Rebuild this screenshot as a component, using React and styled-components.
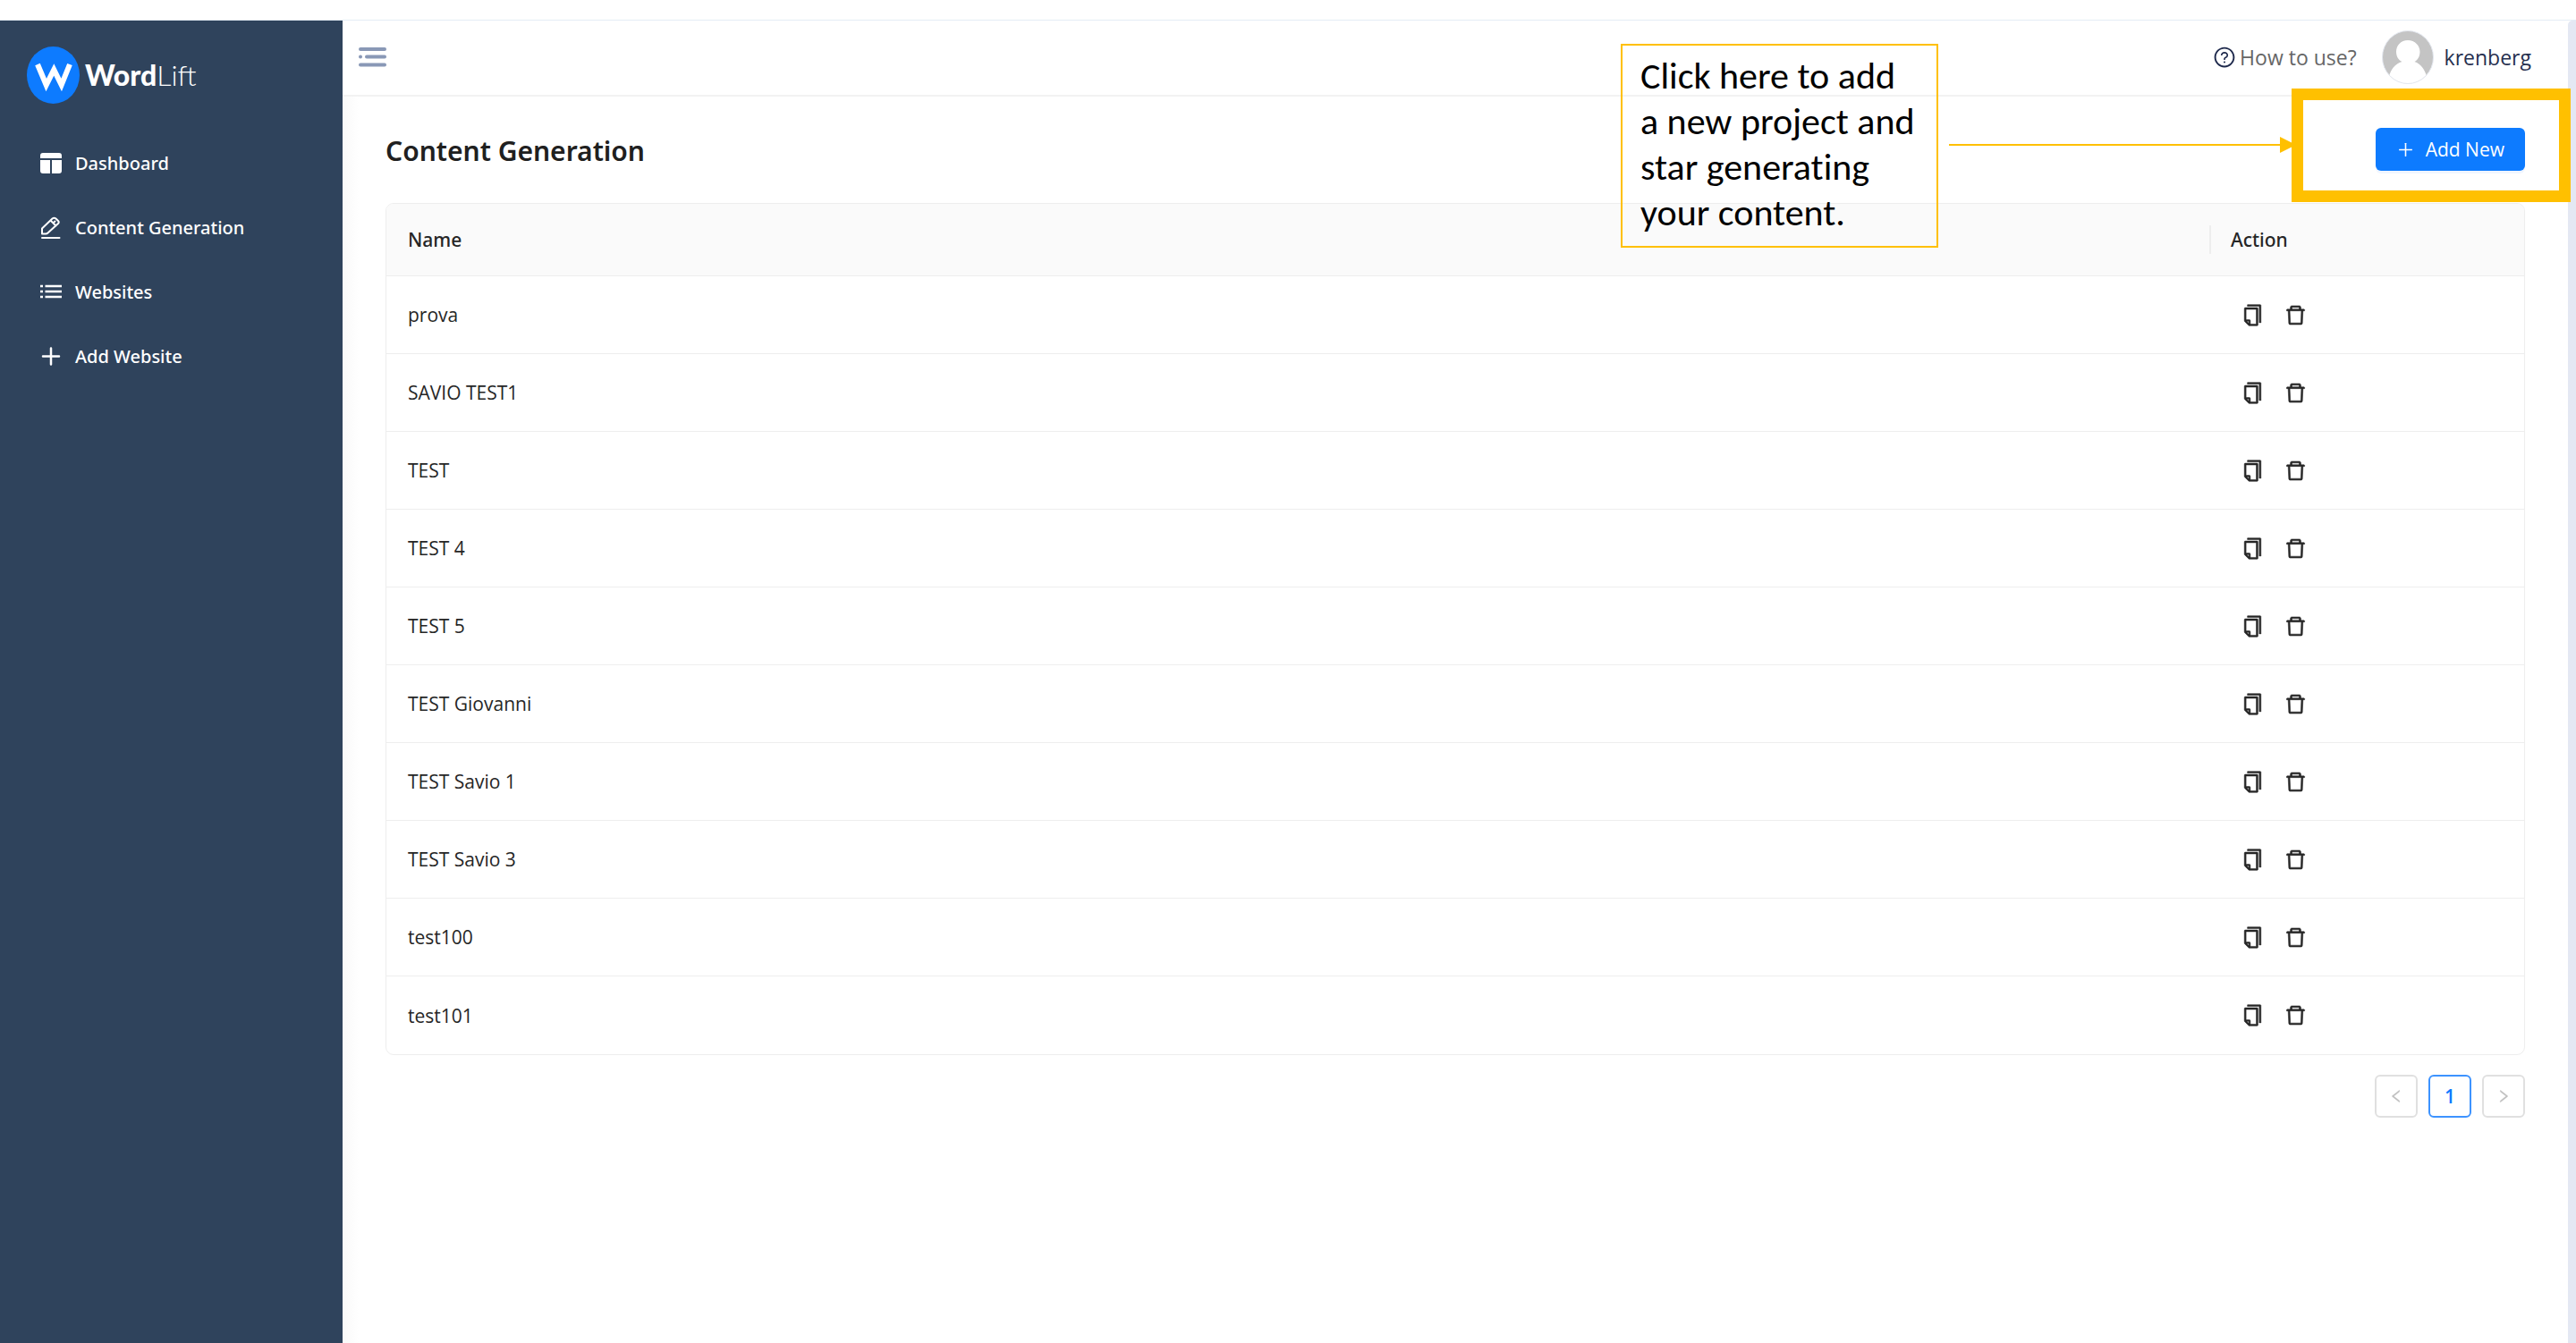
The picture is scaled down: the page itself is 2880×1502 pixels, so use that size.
import React from "react";
import styled, { createGlobalStyle } from "styled-components";
import {
  AiOutlineCopy,
  AiOutlineDelete,
  AiOutlineLeft,
  AiOutlinePlus,
  AiOutlineQuestionCircle,
  AiOutlineRight,
} from "react-icons/ai";

const GlobalStyle = createGlobalStyle`
  *, *::before, *::after { box-sizing: border-box; }
  body {
    margin: 0;
    background: #fff;
    color: #262626;
    font: 400 21px/32px "Open Sans", "Noto Sans", sans-serif;
  }
  button { font: inherit; cursor: pointer; }
  a { color: inherit; text-decoration: none; }
  svg { display: block; flex: none; }
`;

const blue = "#0d7bff";
const amber = "#ffc000";
const line = "#eeeeee";

const Page = styled.div`
  min-height: 100vh;
  padding-top: 22px;
  display: flex;
`;

const Shell = styled.div`
  flex: 1;
  display: flex;
  border-top: 1px solid #e4edf5;
`;

const Sidebar = styled.aside`
  width: 383px;
  flex: none;
  padding: 29px 30px;
  background: #2f435c;
  color: #fff;
`;

const Logo = styled.a`
  display: flex;
  align-items: center;
  gap: 6px;
  height: 64px;
`;

const Wordmark = styled.span`
  font: 300 32px/40px Lato, sans-serif;
  strong { font-weight: 900; }
`;

const Menu = styled.nav`
  display: flex;
  flex-direction: column;
  gap: 12px;
  padding-top: 37px;
`;

const MenuItem = styled.a`
  height: 60px;
  padding-left: 14px;
  display: flex;
  align-items: center;
  gap: 14px;
  font: 500 20px/30px "Noto Sans", "Open Sans", sans-serif;
`;

const Main = styled.div`
  flex: 1;
  min-width: 0;
  display: flex;
  flex-direction: column;
`;

const TopBar = styled.header`
  height: 85px;
  padding: 0 41px 2px 17px;
  display: flex;
  align-items: center;
  justify-content: space-between;
  border-bottom: 2px solid #f2f2f2;
  font-size: 23px;
`;

const PlainButton = styled.button`
  padding: 0;
  border: 0;
  background: none;
  color: inherit;
  display: flex;
`;

const UserArea = styled.div`
  display: flex;
  align-items: center;
  gap: 28px;
`;

const HelpLink = styled.a`
  display: flex;
  align-items: center;
  gap: 4px;
  color: #666;
  svg { color: #1f2a4d; }
`;

const Account = styled.a`
  display: flex;
  align-items: center;
  gap: 12px;
  color: #27304f;
`;

const Content = styled.main`
  flex: 1;
  padding: 35px 48px 48px;
  background: linear-gradient(90deg, #f9f9f9, #fff 18px);
`;

const TitleRow = styled.div`
  display: flex;
  align-items: flex-start;
  justify-content: space-between;
  margin-bottom: 32px;
`;

const Title = styled.h1`
  margin: 0;
  color: #202020;
  font: 600 30px/52px "Noto Sans", "Open Sans", sans-serif;
`;

const AddArea = styled.div`
  position: relative;
`;

const AddButton = styled.button`
  height: 48px;
  padding: 0 23px;
  display: flex;
  align-items: center;
  gap: 12px;
  border: 0;
  border-radius: 6px;
  background: ${blue};
  color: #fff;
  box-shadow: 0 3px 0 rgba(5, 95, 255, 0.06);
`;

const Highlight = styled.div`
  position: absolute;
  top: -44px;
  right: -51px;
  width: 312px;
  height: 127px;
  border: 13px solid ${amber};
  pointer-events: none;
`;

const Pointer = styled.div`
  position: absolute;
  top: 18px;
  right: 274px;
  width: 370px;
  height: 2px;
  background: ${amber};
  &::after {
    content: "";
    position: absolute;
    top: -8px;
    right: -18px;
    border: solid transparent;
    border-width: 9px 0 9px 18px;
    border-left-color: ${amber};
  }
`;

const Callout = styled.p`
  position: absolute;
  top: -94px;
  right: 656px;
  width: 355px;
  margin: 0;
  padding: 8px 20px 12px;
  border: 2px solid ${amber};
  color: #000;
  font: 400 42px/51px Carlito, Calibri, Lato, sans-serif;
  font-variant-ligatures: none;
  white-space: nowrap;
`;

const Table = styled.table`
  width: 100%;
  border: 1px solid ${line};
  border-radius: 9px;
  border-collapse: separate;
  border-spacing: 0;
  table-layout: fixed;
  overflow: hidden;
  text-align: left;
`;

const HeadCell = styled.th`
  width: ${(p) => p.$width || "auto"};
  height: 81px;
  padding: 0;
  background: #fafafa;
  border-bottom: 1px solid ${line};
  font: 500 21px/32px "Noto Sans", "Open Sans", sans-serif;
`;

const HeadLabel = styled.div`
  padding: 0 22px;
  border-left: 2px solid ${(p) => (p.$divided ? line : "transparent")};
`;

const Cell = styled.td`
  height: 87px;
  padding: 0 24px;
  tr:not(:last-child) > & { border-bottom: 1px solid ${line}; }
`;

const Actions = styled.div`
  display: flex;
  gap: 21px;
  padding-left: 11px;
  svg { stroke-width: 20; }
`;

const Pagination = styled.nav`
  display: flex;
  justify-content: flex-end;
  gap: 12px;
  padding-top: 22px;
`;

const PageButton = styled.button`
  width: 48px;
  height: 48px;
  padding: 0;
  display: flex;
  align-items: center;
  justify-content: center;
  border: 2px solid ${(p) => (p.$active ? "#3d93ff" : "#e0e0e0")};
  border-radius: 6px;
  background: #fff;
  color: ${(p) => (p.$active ? blue : "#bfbfbf")};
  font-weight: 600;
  svg { stroke-width: 20; }
`;

const ScrollTrack = styled.div`
  width: 9px;
  flex: none;
  border-radius: 5px 0 0 0;
  background: #e4e8f3;
`;

const LogoMark = () => (
  <svg width="59" height="64" viewBox="0 0 59 64" fill="none" aria-hidden="true">
    <ellipse cx="29.5" cy="32" rx="29.5" ry="32" fill={blue} />
    <path d="M12 20L21.7 43L30.300 26L38.700 43L48 20" stroke="#fff" strokeWidth="6" strokeLinejoin="miter" strokeMiterlimit="6" />
  </svg>
);

const DashboardIcon = () => (
  <svg width="26" height="26" viewBox="0 0 26 26" fill="#fff" aria-hidden="true">
    <path d="M1 7V4a3 3 0 0 1 3-3h18a3 3 0 0 1 3 3v3zM1 9h11v15H4a3 3 0 0 1-3-3zM14 9h11v12a3 3 0 0 1-3 3h-8z" />
  </svg>
);

const PencilIcon = () => (
  <svg width="26" height="26" viewBox="0 0 26 26" fill="none" stroke="#fff" strokeWidth="2" strokeLinejoin="round" strokeLinecap="round" aria-hidden="true">
    <path d="M3 19.500V13.500L14.500 2.500Q16.500 1 18.500 2.500L21 5Q22.500 6.500 21 8L9.500 18.500Q8.500 19.500 7 19.500ZM12.500 4.500L18.500 10.500M15.500 7.500l2-2M3 24H22.500" />
  </svg>
);

const ListIcon = () => (
  <svg width="26" height="26" viewBox="0 0 26 26" stroke="#fff" strokeWidth="2.5" aria-hidden="true">
    <path d="M1 6h3M1 12h3M1 18h3M6.500 6H25M6.500 12H25M6.500 18H25" />
  </svg>
);

const PlusIcon = () => (
  <svg width="26" height="26" viewBox="0 0 26 26" stroke="#fff" strokeWidth="2.5" strokeLinecap="round" aria-hidden="true">
    <path d="M4 12.500H22M13 3.500V21.500" />
  </svg>
);

const CollapseIcon = () => (
  <svg width="32" height="24" viewBox="0 0 32 24" stroke="#8998b6" strokeWidth="4" strokeLinecap="round" aria-hidden="true">
    <path d="M3 3H30M3 11.500h.01M10 11.500H30M3 20.500H30" />
  </svg>
);

const Avatar = () => (
  <svg width="58" height="60" viewBox="0 0 58 60" aria-hidden="true">
    <defs>
      <clipPath id="avatar">
        <ellipse cx="29" cy="30" rx="28.500" ry="29.500" />
      </clipPath>
    </defs>
    <g clipPath="url(#avatar)">
      <rect width="58" height="60" fill="#c4c4c4" />
      <path d="M29 11c8 0 13.500 6 13.500 13 0 5-2.500 9-6 11 7 2.500 11.500 9 13.500 16v12H8V51c2-7 6.500-13.500 14.500-16-4-2-6.500-6-6.500-11 0-7 5-13 13-13z" fill="#fff" />
    </g>
    <ellipse cx="29" cy="30" rx="28.500" ry="29.500" fill="none" stroke="#e4e8f0" />
  </svg>
);

const menu = [
  { label: "Dashboard", Icon: DashboardIcon },
  { label: "Content Generation", Icon: PencilIcon },
  { label: "Websites", Icon: ListIcon },
  { label: "Add Website", Icon: PlusIcon },
];

const projects = [
  "prova",
  "SAVIO TEST1",
  "TEST",
  "TEST 4",
  "TEST 5",
  "TEST Giovanni",
  "TEST Savio 1",
  "TEST Savio 3",
  "test100",
  "test101",
];

export default function App() {
  return (
    <Page>
      <GlobalStyle />
      <Shell>
        <Sidebar>
          <Logo href="#home">
            <LogoMark />
            <Wordmark><strong>Word</strong>Lift</Wordmark>
          </Logo>
          <Menu>
            {menu.map(({ label, Icon }) => (
              <MenuItem href="#menu" key={label}>
                <Icon />
                {label}
              </MenuItem>
            ))}
          </Menu>
        </Sidebar>
        <Main>
          <TopBar>
            <PlainButton aria-label="Collapse menu"><CollapseIcon /></PlainButton>
            <UserArea>
              <HelpLink href="#help">
                <AiOutlineQuestionCircle size={26} />
                How to use?
              </HelpLink>
              <Account href="#account">
                <Avatar />
                krenberg
              </Account>
            </UserArea>
          </TopBar>
          <Content>
            <TitleRow>
              <Title>Content Generation</Title>
              <AddArea>
                <AddButton>
                  <AiOutlinePlus size={21} />
                  Add New
                </AddButton>
                <Highlight />
                <Pointer />
                <Callout>
                  Click here to add<br />a new project and<br />star generating<br />your content.
                </Callout>
              </AddArea>
            </TitleRow>
            <Table>
              <thead>
                <tr>
                  <HeadCell scope="col"><HeadLabel>Name</HeadLabel></HeadCell>
                  <HeadCell scope="col" $width="352px"><HeadLabel $divided>Action</HeadLabel></HeadCell>
                </tr>
              </thead>
              <tbody>
                {projects.map((name) => (
                  <tr key={name}>
                    <Cell>{name}</Cell>
                    <Cell>
                      <Actions>
                        <PlainButton aria-label={`Copy ${name}`}><AiOutlineCopy size={27} /></PlainButton>
                        <PlainButton aria-label={`Delete ${name}`}><AiOutlineDelete size={27} /></PlainButton>
                      </Actions>
                    </Cell>
                  </tr>
                ))}
              </tbody>
            </Table>
            <Pagination aria-label="Pages">
              <PageButton disabled aria-label="Previous page"><AiOutlineLeft size={18} /></PageButton>
              <PageButton $active aria-current="page">1</PageButton>
              <PageButton disabled aria-label="Next page"><AiOutlineRight size={18} /></PageButton>
            </Pagination>
          </Content>
        </Main>
        <ScrollTrack />
      </Shell>
    </Page>
  );
}
